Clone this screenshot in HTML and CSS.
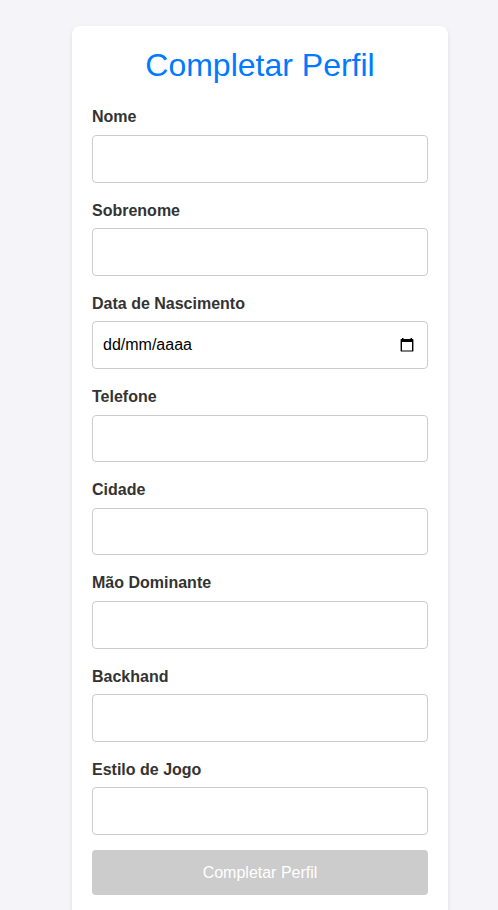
FILE: index.html
```html
<!DOCTYPE html>
<html lang="pt-BR">
<head>
<meta charset="UTF-8">
<title>Completar Perfil</title>
<link rel="stylesheet" href="styles.css">
</head>
<body>
<form class="card">
<h1 class="title">Completar Perfil</h1>
<div class="field"><label for="nome">Nome</label><input id="nome" type="text"></div>
<div class="field"><label for="sobrenome">Sobrenome</label><input id="sobrenome" type="text"></div>
<div class="field"><label>Data de Nascimento</label><div class="date"><span>dd/mm/aaaa</span><svg class="calendar" viewBox="0 0 16 16"><path fill-rule="evenodd" d="M3 1h1.500v1h7V1H13v1h1q.4 0 .4.400V14q0 .4-.4.400H2q-.4 0-.4-.400V2.400Q1.600 2 2 2h1zM3 5v8.500h10V5z"/></svg></div></div>
<div class="field"><label for="telefone">Telefone</label><input id="telefone" type="text"></div>
<div class="field"><label for="cidade">Cidade</label><input id="cidade" type="text"></div>
<div class="field"><label for="mao">Mão Dominante</label><input id="mao" type="text"></div>
<div class="field"><label for="backhand">Backhand</label><input id="backhand" type="text"></div>
<div class="field"><label for="estilo">Estilo de Jogo</label><input id="estilo" type="text"></div>
<button class="submit" type="button">Completar Perfil</button>
</form>
</body>
</html>
```
FILE: styles.css
```css
* { box-sizing: border-box; }
html { overflow: hidden; }
body {
  margin: 0;
  padding: 26px 50px 0 72px;
  background: #f4f4f9;
  color: #333;
  font-family: "Liberation Sans", Arial, sans-serif;
  font-size: 16px;
}
.card {
  width: 376px;
  height: 920px;
  padding: 20px;
  background: #fff;
  border-radius: 8px;
  box-shadow: 0 2px 4px rgba(0, 0, 0, .1);
}
.title {
  margin: 0 0 20.4px;
  color: #007bff;
  font-size: 32px;
  font-weight: 400;
  line-height: 38px;
  text-align: center;
}
.field { height: 93.2px; }
label {
  display: block;
  height: 30.6px;
  line-height: 25px;
  font-weight: 700;
}
input, .date {
  display: flex;
  align-items: center;
  width: 100%;
  height: 47.6px;
  padding: 0 10px;
  border: 1px solid #ccc;
  border-radius: 4px;
  background: #fff;
  font: inherit;
  color: #000;
}
.date { justify-content: space-between; }
.calendar {
  width: 16px;
  height: 16px;
  margin-right: 2px;
}
.submit {
  display: block;
  width: 100%;
  height: 45px;
  padding: 2px 0 0;
  border: 0;
  border-radius: 4px;
  background: #ccc;
  color: #fff;
  font: inherit;
}
```
